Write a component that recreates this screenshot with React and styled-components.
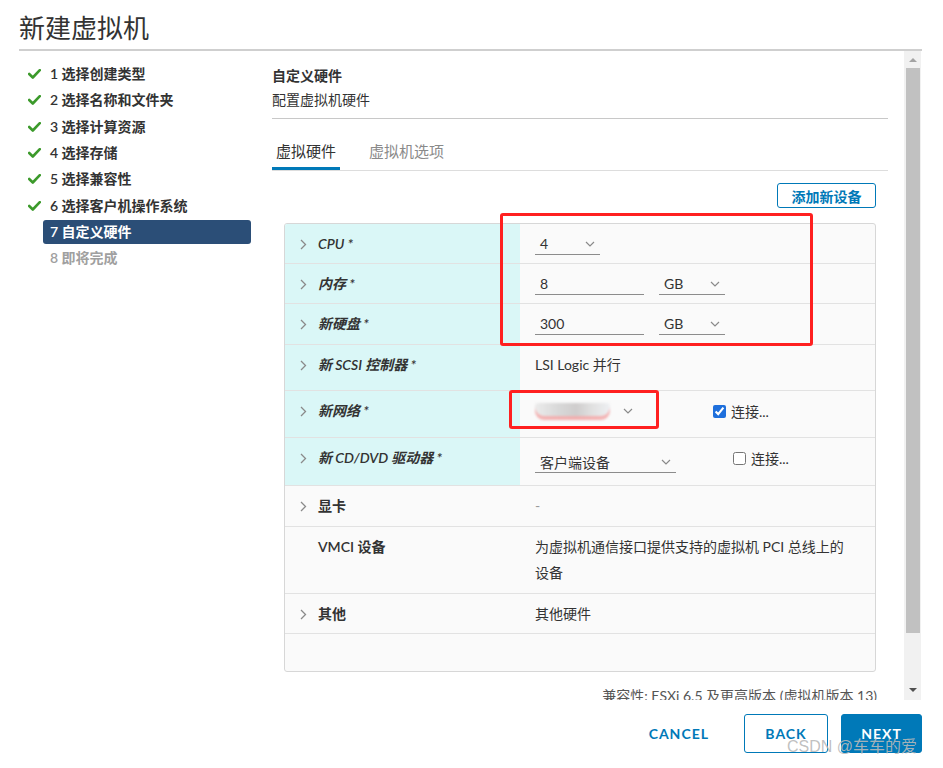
import React from "react";
import styled, { createGlobalStyle } from "styled-components";

const GlobalStyle = createGlobalStyle`
  html, body {
    margin: 0;
    padding: 0;
    background: #ffffff;
  }
  body {
    font-family: Lato, "Noto Sans CJK SC", sans-serif;
    color: #333333;
  }
`;

const steps = [
  { label: "1 选择创建类型", state: "done" },
  { label: "2 选择名称和文件夹", state: "done" },
  { label: "3 选择计算资源", state: "done" },
  { label: "4 选择存储", state: "done" },
  { label: "5 选择兼容性", state: "done" },
  { label: "6 选择客户机操作系统", state: "done" },
  { label: "7 自定义硬件", state: "active" },
  { label: "8 即将完成", state: "pending" },
];

const CheckIcon = () => (
  <svg width="13" height="10" viewBox="0 0 13 10">
    <polyline
      points="1.2,5 4.8,8.5 11.8,1.2"
      fill="none"
      stroke="#3c9a2b"
      strokeWidth="2.6"
      strokeLinecap="round"
      strokeLinejoin="round"
    />
  </svg>
);

const RightChevron = () => (
  <svg width="7" height="11" viewBox="0 0 7 11">
    <polyline points="1,1 5.5,5.5 1,10" fill="none" stroke="#8a8a8a" strokeWidth="1.3" />
  </svg>
);

const DownChevron = () => (
  <svg width="10" height="6" viewBox="0 0 10 6">
    <polyline points="1,1 5,5 9,1" fill="none" stroke="#8a8a8a" strokeWidth="1.2" />
  </svg>
);

const App = () => {
  return (
    <Page>
      <GlobalStyle />
      <Header>
        <Title>新建虚拟机</Title>
      </Header>
      <Body>
        <Nav>
          {steps.map((s) => (
            <NavItem key={s.label}>
              <IconSlot>{s.state === "done" && <CheckIcon />}</IconSlot>
              <NavLabel state={s.state}>{s.label}</NavLabel>
            </NavItem>
          ))}
        </Nav>
        <Main>
          <Content>
            <PageHead>
              <HeadTitle>自定义硬件</HeadTitle>
              <HeadSub>配置虚拟机硬件</HeadSub>
            </PageHead>
            <Tabs>
              <Tab active>虚拟硬件</Tab>
              <Tab>虚拟机选项</Tab>
            </Tabs>
            <Toolbar>
              <OutlineButton>添加新设备</OutlineButton>
            </Toolbar>
            <Table>
              <Row h={40}>
                <LabelCell tinted>
                  <Chev><RightChevron /></Chev>
                  <Label italic>CPU *</Label>
                </LabelCell>
                <ValueCell>
                  <Select w={65}>
                    <span>4</span>
                    <DownChevron />
                  </Select>
                </ValueCell>
              </Row>
              <Row h={40}>
                <LabelCell tinted>
                  <Chev><RightChevron /></Chev>
                  <Label italic>内存 *</Label>
                </LabelCell>
                <ValueCell gap={15}>
                  <Select w={109}>
                    <span>8</span>
                  </Select>
                  <Select w={66}>
                    <span>GB</span>
                    <DownChevron />
                  </Select>
                </ValueCell>
              </Row>
              <Row h={41}>
                <LabelCell tinted>
                  <Chev><RightChevron /></Chev>
                  <Label italic>新硬盘 *</Label>
                </LabelCell>
                <ValueCell gap={15}>
                  <Select w={109}>
                    <span>300</span>
                  </Select>
                  <Select w={66}>
                    <span>GB</span>
                    <DownChevron />
                  </Select>
                </ValueCell>
              </Row>
              <Row h={46}>
                <LabelCell tinted>
                  <Chev><RightChevron /></Chev>
                  <Label italic>新 SCSI 控制器 *</Label>
                </LabelCell>
                <ValueCell>
                  <PlainValue>LSI Logic 并行</PlainValue>
                </ValueCell>
              </Row>
              <Row h={47}>
                <LabelCell tinted>
                  <Chev><RightChevron /></Chev>
                  <Label italic>新网络 *</Label>
                </LabelCell>
                <ValueCell>
                  <Select w={103} bare>
                    <Blur />
                    <DownChevron />
                  </Select>
                  <CheckGroup ml={75}>
                    <Check type="checkbox" defaultChecked />
                    <span>连接...</span>
                  </CheckGroup>
                </ValueCell>
              </Row>
              <Row h={48}>
                <LabelCell tinted>
                  <Chev><RightChevron /></Chev>
                  <Label italic>新 CD/DVD 驱动器 *</Label>
                </LabelCell>
                <ValueCell>
                  <Select w={141} drop={4}>
                    <span>客户端设备</span>
                    <DownChevron />
                  </Select>
                  <CheckGroup ml={57}>
                    <Check type="checkbox" />
                    <span>连接...</span>
                  </CheckGroup>
                </ValueCell>
              </Row>
              <Row h={41}>
                <LabelCell>
                  <Chev><RightChevron /></Chev>
                  <Label>显卡</Label>
                </LabelCell>
                <ValueCell>
                  <PlainValue muted>-</PlainValue>
                </ValueCell>
              </Row>
              <Row h={67}>
                <LabelCell>
                  <Chev />
                  <Label>VMCI 设备</Label>
                </LabelCell>
                <ValueCell>
                  <LongValue>
                    为虚拟机通信接口提供支持的虚拟机 PCI 总线上的
                    <br />
                    设备
                  </LongValue>
                </ValueCell>
              </Row>
              <Row h={40}>
                <LabelCell>
                  <Chev><RightChevron /></Chev>
                  <Label>其他</Label>
                </LabelCell>
                <ValueCell>
                  <PlainValue>其他硬件</PlainValue>
                </ValueCell>
              </Row>
              <Filler />
            </Table>
            <Compat>兼容性: ESXi 6.5 及更高版本 (虚拟机版本 13)</Compat>
          </Content>
          <Scrollbar>
            <ArrowUp />
            <Thumb />
            <TrackRest />
            <ArrowDown />
          </Scrollbar>
        </Main>
      </Body>
      <Footer>
        <FlatButton>CANCEL</FlatButton>
        <FooterButton>BACK</FooterButton>
        <FooterButton primary>NEXT</FooterButton>
      </Footer>

      <Marker style={{ left: 500, top: 213, width: 313, height: 133 }} />
      <Marker style={{ left: 509, top: 390, width: 150, height: 39 }} />
      <Watermark>CSDN @车车的爱</Watermark>
    </Page>
  );
};

export default App;

const Page = styled.div`
  position: relative;
  width: 943px;
  height: 768px;
  overflow: hidden;
  background: #ffffff;
`;

const Header = styled.div`
  margin: 0 21px 0 19px;
  padding: 10px 0 3px;
  border-bottom: 2px solid #cfcfcf;
`;

const Title = styled.h1`
  margin: 0;
  font-size: 26px;
  font-weight: 400;
  line-height: 36px;
  color: #333333;
`;

const Body = styled.div`
  display: flex;
  height: 649px;
`;

const Nav = styled.div`
  width: 272px;
  flex: none;
  padding-top: 10px;
  box-sizing: border-box;
`;

const NavItem = styled.div`
  display: flex;
  align-items: center;
  height: 26.3px;
  padding-left: 28px;
`;

const IconSlot = styled.div`
  width: 15px;
  display: flex;
  align-items: center;
`;

const NavLabel = styled.div`
  width: 208px;
  height: 24px;
  line-height: 24px;
  padding: 0 7px;
  box-sizing: border-box;
  border-radius: 3px;
  font-size: 14px;
  font-weight: 600;
  white-space: nowrap;
  background: ${(p) => (p.state === "active" ? "#2b4e77" : "transparent")};
  color: ${(p) =>
    p.state === "active" ? "#ffffff" : p.state === "pending" ? "#a0a0a0" : "#333333"};
`;

const Main = styled.div`
  display: flex;
  width: 649px;
  height: 649px;
`;

const Content = styled.div`
  width: 616px;
  height: 649px;
  padding-top: 13px;
  box-sizing: border-box;
  overflow: hidden;
`;

const PageHead = styled.div`
  padding-bottom: 6px;
  border-bottom: 1px solid #c8c8c8;
`;

const HeadTitle = styled.div`
  font-size: 14px;
  font-weight: 600;
  line-height: 24px;
`;

const HeadSub = styled.div`
  font-size: 14px;
  line-height: 24px;
`;

const Tabs = styled.div`
  display: flex;
  gap: 25px;
  margin-top: 14px;
  height: 37px;
  border-bottom: 1px solid #dddddd;
`;

const Tab = styled.div`
  padding: 0 4px;
  font-size: 15px;
  line-height: 37px;
  color: ${(p) => (p.active ? "#333333" : "#8a8a8a")};
  box-shadow: ${(p) => (p.active ? "inset 0 -3px 0 #0079b8" : "none")};
`;

const Toolbar = styled.div`
  display: flex;
  justify-content: flex-end;
  padding: 12px 12px 0;
`;

const OutlineButton = styled.button`
  width: 99px;
  height: 25px;
  padding: 0;
  border: 1px solid #0079b8;
  border-radius: 3px;
  background: #ffffff;
  color: #0079b8;
  font-family: Lato, "Noto Sans CJK SC", sans-serif;
  font-size: 14px;
  font-weight: 600;
`;

const Table = styled.div`
  margin: 15px 12px 0;
  border: 1px solid #d7d7d7;
  border-radius: 3px;
  background: #fafafa;
  overflow: hidden;
`;

const Row = styled.div`
  display: flex;
  height: ${(p) => p.h}px;
  box-sizing: border-box;
  border-bottom: 1px solid #e2e2e2;
`;

const LabelCell = styled.div`
  width: 235px;
  flex: none;
  display: flex;
  align-items: flex-start;
  padding: 10px 0 0 15px;
  box-sizing: border-box;
  background: ${(p) => (p.tinted ? "#daf7f7" : "transparent")};
`;

const Chev = styled.div`
  width: 18px;
  height: 20px;
  flex: none;
  display: flex;
  align-items: center;
`;

const Label = styled.div`
  font-size: 14px;
  font-weight: 600;
  line-height: 20px;
  font-style: ${(p) => (p.italic ? "italic" : "normal")};
  color: #333333;
  white-space: nowrap;
`;

const ValueCell = styled.div`
  flex: 1;
  display: flex;
  align-items: flex-start;
  gap: ${(p) => p.gap || 0}px;
  padding: 9px 15px 0;
  font-size: 14px;
`;

const Select = styled.div`
  width: ${(p) => p.w}px;
  height: 22px;
  margin-top: ${(p) => p.drop || 0}px;
  padding: 0 5px;
  box-sizing: border-box;
  display: flex;
  align-items: center;
  justify-content: space-between;
  border-bottom: ${(p) => (p.bare ? "none" : "1px solid #8c8c8c")};
  font-size: 14px;
  color: #333333;
  flex: none;
`;

const Blur = styled.div`
  width: 75px;
  height: 17px;
  margin-left: -5px;
  border-radius: 3px 3px 9px 9px;
  background: linear-gradient(to right, #ececec, #d9d9d9 30%, #cfcdcd 55%, #e0e0e0 75%, #eef0f3);
  box-shadow: inset 0 -4px 0 rgba(246, 170, 170, 0.85);
  filter: blur(0.8px);
`;

const CheckGroup = styled.label`
  display: flex;
  align-items: center;
  gap: 5px;
  height: 22px;
  margin-left: ${(p) => p.ml}px;
  font-size: 14px;
  color: #333333;
  white-space: nowrap;
`;

const Check = styled.input`
  width: 13px;
  height: 13px;
  margin: 0;
  accent-color: #1e6fdc;
`;

const PlainValue = styled.div`
  margin-top: 1px;
  line-height: 20px;
  color: ${(p) => (p.muted ? "#999999" : "#333333")};
`;

const LongValue = styled.div`
  margin-top: -2px;
  line-height: 26px;
  color: #333333;
`;

const Filler = styled.div`
  height: 37px;
`;

const Compat = styled.div`
  margin-top: 14px;
  padding-right: 11px;
  text-align: right;
  font-size: 14px;
  line-height: 20px;
  color: #555555;
  white-space: nowrap;
`;

const Scrollbar = styled.div`
  width: 17px;
  margin-left: 16px;
  height: 649px;
  background: #f1f1f1;
  display: flex;
  flex-direction: column;
  align-items: center;
`;

const ArrowUp = styled.div`
  margin: 7px 0 6px;
  width: 0;
  height: 0;
  border-left: 4px solid transparent;
  border-right: 4px solid transparent;
  border-bottom: 4px solid #a3a3a3;
`;

const ArrowDown = styled.div`
  margin: 0 0 8px;
  width: 0;
  height: 0;
  border-left: 4px solid transparent;
  border-right: 4px solid transparent;
  border-top: 4px solid #505050;
`;

const Thumb = styled.div`
  width: 14px;
  height: 565px;
  background: #c1c1c1;
`;

const TrackRest = styled.div`
  flex: 1;
`;

const Footer = styled.div`
  display: flex;
  justify-content: flex-end;
  align-items: center;
  gap: 13px;
  padding: 14px 21px 0 0;
`;

const FlatButton = styled.button`
  height: 39px;
  padding: 0 12px;
  margin-right: 10px;
  border: none;
  background: transparent;
  color: #0079b8;
  font-family: Lato, sans-serif;
  font-size: 14px;
  font-weight: 700;
  letter-spacing: 1px;
`;

const FooterButton = styled.button`
  width: ${(p) => (p.primary ? 81 : 84)}px;
  height: 39px;
  padding: 0;
  border: 1px solid #0079b8;
  border-radius: 3px;
  background: ${(p) => (p.primary ? "#0079b8" : "#ffffff")};
  color: ${(p) => (p.primary ? "#ffffff" : "#0079b8")};
  font-family: Lato, sans-serif;
  font-size: 14px;
  font-weight: 700;
  letter-spacing: 1px;
`;

const Marker = styled.div`
  position: absolute;
  box-sizing: border-box;
  border: 3px solid #ff2020;
  border-radius: 3px;
  pointer-events: none;
`;

const Watermark = styled.div`
  position: absolute;
  left: 787px;
  top: 737px;
  font-family: "Liberation Sans", "Noto Sans CJK SC", sans-serif;
  font-size: 16px;
  line-height: 20px;
  color: rgba(185, 185, 185, 0.9);
  white-space: nowrap;
  pointer-events: none;
`;
